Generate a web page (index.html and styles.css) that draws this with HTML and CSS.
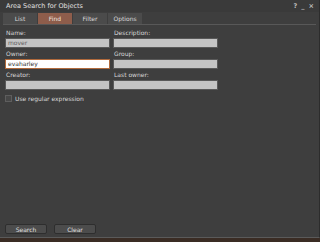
FILE: index.html
```html
<!DOCTYPE html>
<html lang="en">
<head>
    <meta charset="UTF-8">
    <title>Area Search for Objects</title>
    <link rel="stylesheet" href="styles.css">
</head>
<body>
    <div class="window">
        <div class="titlebar">
            <span class="title">Area Search for Objects</span>
            <div class="controls">
                <span>?</span>
                <span>_</span>
                <span>×</span>
            </div>
        </div>

        <div class="tabs">
            <div class="tab">List</div>
            <div class="tab active">Find</div>
            <div class="tab">Filter</div>
            <div class="tab">Options</div>
        </div>

        <div class="panel">
            <div class="fields">
                <div class="field">
                    <label>Name:</label>
                    <div class="input">mover</div>
                </div>
                <div class="field">
                    <label>Description:</label>
                    <div class="input"></div>
                </div>
                <div class="field">
                    <label>Owner:</label>
                    <div class="input focused">evaharley</div>
                </div>
                <div class="field">
                    <label>Group:</label>
                    <div class="input"></div>
                </div>
                <div class="field">
                    <label>Creator:</label>
                    <div class="input"></div>
                </div>
                <div class="field">
                    <label>Last owner:</label>
                    <div class="input"></div>
                </div>
            </div>

            <div class="check">
                <span class="box"></span>
                <span>Use regular expression</span>
            </div>

            <div class="buttons">
                <button>Search</button>
                <button>Clear</button>
            </div>
        </div>
    </div>
    <div class="desktop"></div>
</body>
</html>
```

FILE: styles.css
```css
body {
    margin: 0;
    width: 320px;
    height: 242px;
    overflow: hidden;
    background-color: #3a2c24;
    font-family: "DejaVu Sans", sans-serif;
    font-size: 6px;
    color: #d8d8d8;
}

.window {
    height: 237px;
    background-color: #3e3e3e;
    border-bottom: 1px solid #5a5a5a;
    border-right: 1px solid #2c2c2c;
    display: flex;
    flex-direction: column;
}

.titlebar {
    height: 12px;
    display: flex;
    align-items: center;
    justify-content: space-between;
    padding: 0 5px 0 6px;
    background-color: #3a3a3a;
}

.title {
    font-size: 6.5px;
    color: #e0e0e0;
}

.controls {
    display: flex;
    gap: 4px;
    color: #bdbdbd;
    font-size: 6.5px;
    font-weight: bold;
}

.tabs {
    display: flex;
    margin: 1px 3px 0 3px;
    height: 11px;
    border-bottom: 1px solid #585858;
}

.tab {
    width: 34px;
    margin-right: 1px;
    background-color: #4b4b4b;
    color: #dadada;
    text-align: center;
    line-height: 11px;
}

.tab.active {
    background-color: #8e5d4b;
    color: #f0e6e0;
}

.panel {
    flex: 1;
    display: flex;
    flex-direction: column;
    padding: 2px 5px 3px 5px;
}

.fields {
    display: grid;
    grid-template-columns: 105px 105px;
    column-gap: 3px;
}

.field label {
    display: block;
    height: 11px;
    line-height: 11px;
    padding-left: 1px;
}

.input {
    height: 8px;
    line-height: 8px;
    background-color: #c4c4c4;
    border: 1px solid #595959;
    color: #606060;
    padding-left: 2px;
}

.input.focused {
    background-color: #ffffff;
    border-color: #b06a3c;
    color: #303030;
}

.check {
    display: flex;
    align-items: center;
    gap: 3px;
    margin-top: 5px;
}

.box {
    width: 5px;
    height: 5px;
    background-color: #474747;
    border: 1px solid #5e5e5e;
}

.buttons {
    margin-top: auto;
    display: flex;
    gap: 7px;
}

.buttons button {
    width: 42px;
    height: 10px;
    padding: 0;
    font-family: "DejaVu Sans", sans-serif;
    font-size: 6px;
    color: #e0e0e0;
    background-color: #4c4c4c;
    border: 1px solid #2e2e2e;
    border-radius: 2px;
}
```
